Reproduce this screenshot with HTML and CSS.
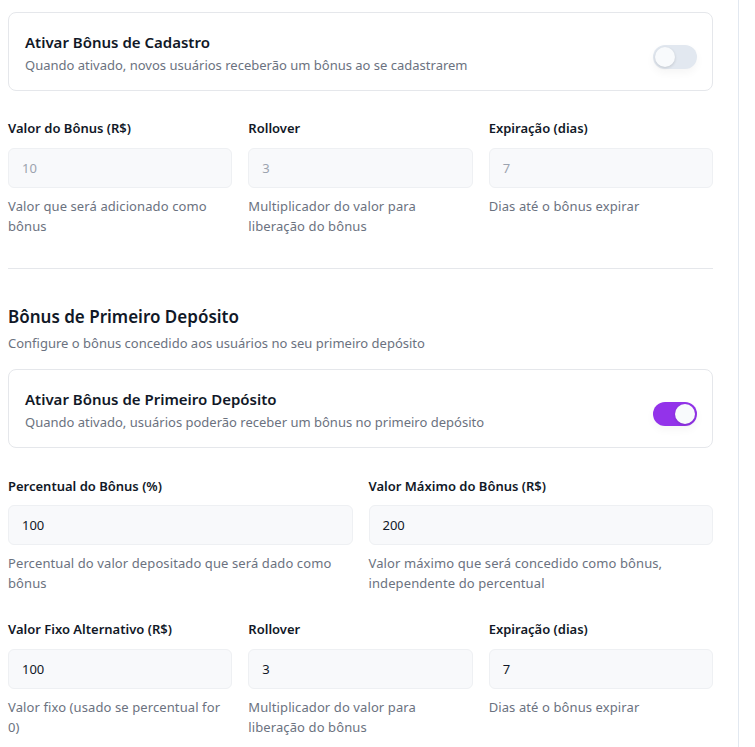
FILE: index.html
```html
<!DOCTYPE html>
<html lang="pt-BR">
<head>
<meta charset="utf-8">
<title>Bônus</title>
<link rel="stylesheet" href="styles.css">
</head>
<body>
<div class="shell">
  <main class="panel">
    <section class="card">
      <div class="card-text">
        <div class="card-title">Ativar Bônus de Cadastro</div>
        <div class="card-sub">Quando ativado, novos usuários receberão um bônus ao se cadastrarem</div>
      </div>
      <span class="toggle"><span class="knob"></span></span>
    </section>

    <div class="grid three first-grid">
      <div class="field">
        <label class="label">Valor do Bônus (R$)</label>
        <div class="input disabled">10</div>
        <p class="help">Valor que será adicionado como bônus</p>
      </div>
      <div class="field">
        <label class="label">Rollover</label>
        <div class="input disabled">3</div>
        <p class="help">Multiplicador do valor para liberação do bônus</p>
      </div>
      <div class="field">
        <label class="label">Expiração (dias)</label>
        <div class="input disabled">7</div>
        <p class="help">Dias até o bônus expirar</p>
      </div>
    </div>

    <hr class="divider">

    <h2 class="section-title">Bônus de Primeiro Depósito</h2>
    <p class="section-sub">Configure o bônus concedido aos usuários no seu primeiro depósito</p>

    <section class="card">
      <div class="card-text">
        <div class="card-title">Ativar Bônus de Primeiro Depósito</div>
        <div class="card-sub">Quando ativado, usuários poderão receber um bônus no primeiro depósito</div>
      </div>
      <span class="toggle on"><span class="knob"></span></span>
    </section>

    <div class="grid two">
      <div class="field">
        <label class="label">Percentual do Bônus (%)</label>
        <div class="input">100</div>
        <p class="help">Percentual do valor depositado que será dado como bônus</p>
      </div>
      <div class="field">
        <label class="label">Valor Máximo do Bônus (R$)</label>
        <div class="input">200</div>
        <p class="help">Valor máximo que será concedido como bônus, independente do percentual</p>
      </div>
    </div>

    <div class="grid three last-grid">
      <div class="field">
        <label class="label">Valor Fixo Alternativo (R$)</label>
        <div class="input">100</div>
        <p class="help">Valor fixo (usado se percentual for 0)</p>
      </div>
      <div class="field">
        <label class="label">Rollover</label>
        <div class="input">3</div>
        <p class="help">Multiplicador do valor para liberação do bônus</p>
      </div>
      <div class="field">
        <label class="label">Expiração (dias)</label>
        <div class="input">7</div>
        <p class="help">Dias até o bônus expirar</p>
      </div>
    </div>
  </main>
  <aside class="rail"></aside>
</div>
</body>
</html>
```

FILE: styles.css
```css
* { box-sizing: border-box; }
html, body { margin: 0; padding: 0; background: #ffffff; }
body {
  font-family: "Noto Sans", "Open Sans", sans-serif;
  color: #111827;
  overflow: hidden;
  height: 747px;
}
.shell {
  display: flex;
  height: 747px;
}
.panel {
  width: 739px;
  border-right: 1px solid #e2e8f0;
  padding: 12px 25px 0 8px;
}
.rail {
  flex: 1;
  background: #ffffff;
}
.card {
  display: flex;
  align-items: center;
  justify-content: space-between;
  border: 1px solid #e5e7eb;
  border-radius: 8px;
  padding: 17px 15px 15px 16px;
  height: 79px;
}
.card-title {
  font-size: 15px;
  font-weight: 600;
  line-height: 22px;
  color: #111827;
}
.card-sub {
  font-size: 13px;
  line-height: 20px;
  color: #6b7280;
  margin-top: 2px;
}
.toggle {
  position: relative;
  width: 44px;
  height: 24px;
  margin-top: 8px;
  border-radius: 12px;
  background: #e2e8f0;
  flex-shrink: 0;
  box-shadow: 0 4px 8px rgba(0,0,0,0.04);
}
.toggle .knob {
  position: absolute;
  top: 2px;
  left: 2px;
  width: 20px;
  height: 20px;
  border-radius: 50%;
  background: #f8fafc;
  box-shadow: 0 1px 3px rgba(0,0,0,0.15);
}
.toggle.on { background: #9333ea; }
.toggle.on .knob { left: 22px; }

.grid {
  display: grid;
  column-gap: 16px;
}
.grid.three { grid-template-columns: 1fr 1fr 1fr; }
.grid.two { grid-template-columns: 1fr 1fr; margin-top: 28px; }
.grid.two .input { margin-top: 9px; }
.first-grid { margin-top: 27px; }
.last-grid { margin-top: 26px; }
.field { display: flex; flex-direction: column; }
.label {
  font-size: 13px;
  font-weight: 600;
  line-height: 20px;
  color: #111827;
}
.input {
  margin-top: 10px;
  height: 40px;
  border: 1px solid #eef0f3;
  border-radius: 6px;
  background: #f8f9fb;
  padding: 0 13px;
  display: flex;
  align-items: center;
  font-size: 13px;
  color: #111827;
}
.input.disabled { color: #9ca3af; }
.help {
  margin: 8px 0 0;
  font-size: 13px;
  letter-spacing: 0.1px;
  line-height: 20px;
  color: #6b7280;
}
.divider {
  border: 0;
  border-top: 1px solid #e5e7eb;
  margin: 32px 0 0;
}
.section-title {
  margin: 35px 0 0;
  font-size: 17px;
  font-weight: 600;
  line-height: 26px;
  color: #111827;
}
.section-sub {
  margin: 3px 0 16px;
  font-size: 13px;
  line-height: 20px;
  color: #6b7280;
}
```
